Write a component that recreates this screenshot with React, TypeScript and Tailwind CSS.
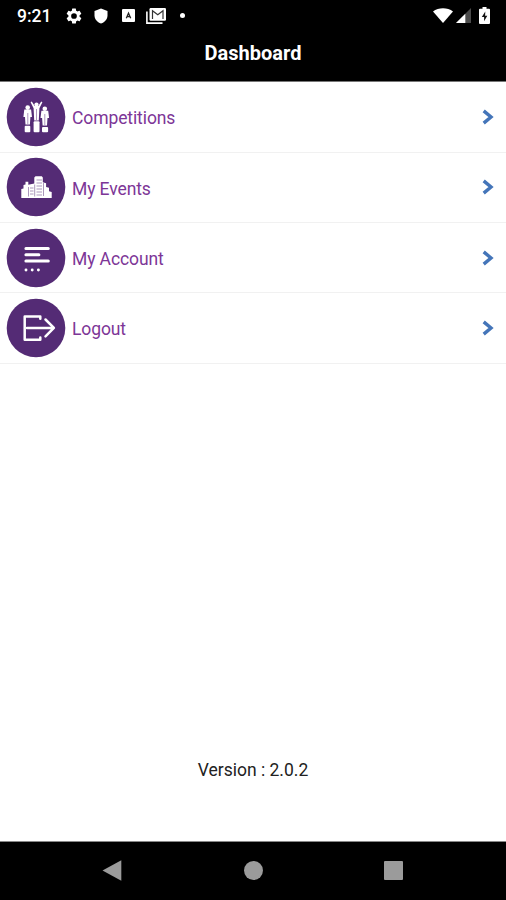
import type { ReactNode } from "react";

function StatusBar() {
  return (
    <div className="flex h-8 items-center bg-black pb-px text-white">
      <span className="ml-[17px] w-12 text-[17.500px] leading-8 font-medium">9:21</span>

      {/* Notifications */}
      <svg className="size-[18px]" viewBox="0 0 24 24" fill="currentColor">
        <path d="M19.4 13a7.500 7.500 0 0 0 0-2l2.100-1.650a.5.5 0 0 0 .12-.64l-2-3.460a.5.5 0 0 0-.61-.22l-2.490 1a7.300 7.300 0 0 0-1.690-.98l-.38-2.650A.49.49 0 0 0 14 2h-4a.49.49 0 0 0-.49.42l-.38 2.650a7.700 7.700 0 0 0-1.690.98l-2.490-1a.49.49 0 0 0-.61.22l-2 3.460a.49.49 0 0 0 .12.64L4.570 11a7.900 7.900 0 0 0 0 2l-2.110 1.650a.5.5 0 0 0-.12.64l2 3.460c.12.22.39.3.61.22l2.490-1c.52.4 1.080.73 1.690.98l.38 2.650c.03.24.24.42.49.42h4c.25 0 .46-.18.49-.42l.38-2.650a7.700 7.700 0 0 0 1.690-.98l2.490 1c.23.09.49 0 .61-.22l2-3.460a.5.5 0 0 0-.12-.64zM12 15.800a3.800 3.800 0 1 1 0-7.600 3.800 3.800 0 0 1 0 7.600z" />
      </svg>
      <svg className="ml-[11px] h-4 w-[14px]" viewBox="0 0 14 16" fill="currentColor">
        <path d="M7 .5 13.500 3v4.500c0 3.700-2.500 6.600-6.500 8-4-1.400-6.500-4.300-6.500-8V3z" />
      </svg>
      <svg className="ml-[14px] size-[13px]" viewBox="0 0 13 13">
        <rect width="13" height="13" rx="1" fill="currentColor" />
        <path d="m4.300 9.200 2.200-5 2.200 5M5 7.600h3" fill="none" stroke="#222" strokeWidth="1.300" />
      </svg>
      <svg className="ml-[11px] h-4 w-5" viewBox="0 0 20 16">
        <path d="M.9 3.500v11.600h15.600" fill="none" stroke="currentColor" strokeWidth="1.600" />
        <rect x="3.500" y="0" width="16.500" height="12.800" rx="1.200" fill="currentColor" />
        <path d="M6.500 11V2.800l5.250 4 5.250-4V11" fill="none" stroke="#333" strokeWidth="1.200" />
      </svg>
      <span className="ml-[14px] size-[5px] rounded-full bg-white" />

      {/* Signal and battery */}
      <svg className="ml-auto h-[15px] w-5" viewBox="0 0 20 15" fill="currentColor">
        <path d="M0 3.500C5.500-.9 14.500-.9 20 3.500L10 15z" />
      </svg>
      <svg className="ml-[3px] size-[15px]" viewBox="0 0 15 15">
        <path d="M15 0v15H0z" fill="#4b4b4b" />
        <path d="M9.300 5.700V15H0z" fill="currentColor" />
      </svg>
      <svg className="mr-4 ml-2 h-[17px] w-[11px]" viewBox="0 0 11 17">
        <path d="M3.500 0h4v1.800H10q1 0 1 1V16q0 1-1 1H1q-1 0-1-1V2.800q0-1 1-1h2.500z" fill="currentColor" />
        <path d="M6.300 4.500 2.800 10h2.300v4.300L8.300 8.700H6.100z" fill="#111" />
      </svg>
    </div>
  );
}

function PodiumIcon() {
  return (
    <g fill="#fff">
      <circle cx="21.700" cy="20.600" r="2.300" />
      <circle cx="30.500" cy="17.500" r="2.100" />
      <circle cx="38.800" cy="21.700" r="2.300" />
      <path d="M18.300 22.600h6.800l.9 7.400h-1.600l-.5 7.500h-4.400L19 30h-1.600z" />
      <path d="M35.400 23.700h6.800l.9 7.300h-1.600l-.5 7.500h-4.400L36.100 31h-1.600z" />
      <path d="m24.600 15.300 1.200-.7 2.900 4.300h3.600l2.900-4.300 1.200.7-3 6-.6 12.200h-4.600l-.6-12.200z" />
      <rect x="18.700" y="38.800" width="5.600" height="6.500" rx="1" />
      <rect x="27.600" y="34.300" width="5.900" height="11" rx="1" />
      <rect x="36" y="40" width="6.100" height="5.300" rx="1" />
      <path d="M21.800 26v11M30.500 22v11M38.800 27v11" stroke="#a58bb7" strokeWidth=".9" />
    </g>
  );
}

function BuildingsIcon() {
  return (
    <g>
      <path
        d="M15.300 40.700v-9l2.200-.5v-3.500l2-.5v-2.700h2.800v3l6-1.200v-6.200l1.200-1.200h6.300l1 1.200v4.800l3.300 1v3.700l2.900.8v3.600l2.700.6v6.100z"
        transform="translate(0 .3)"
        fill="#fff"
      />
      <path
        d="M28.700 27.500v12M22.500 30v9.500M30.500 23h5.500M30.500 26h5.500M30.500 29h5.500M30.500 32h5.500M30.500 35h5.500M30.500 38h5.500M24 31h3.500M24 34h3.500M24 37h3.500M37.500 26v13"
        fill="none"
        stroke="#a18bb3"
        strokeWidth=".9"
      />
    </g>
  );
}

function AccountIcon() {
  return (
    <g fill="none" stroke="#fff" strokeWidth="3" strokeLinecap="round">
      <path d="M19.900 20.500h22.400M19.900 26.700h13M19.900 33h22.400" />
      <path d="M20 42h.01M26.200 42h.01M32.400 42h.01" strokeWidth="2.900" />
    </g>
  );
}

function LogoutIcon() {
  return (
    <g fill="none" stroke="#fff" strokeWidth="2.500" strokeLinecap="round" strokeLinejoin="round">
      <path d="M34.300 18.500H18.700v23.200h15.600M34.300 18.500v2.300M34.300 41.700v-2.300" />
      <path d="M21 29.900h26.500M39.500 21.500l8.400 8.400-8.400 8.400" />
    </g>
  );
}

const menu: { label: string; icon: ReactNode }[] = [
  { label: "Competitions", icon: <PodiumIcon /> },
  { label: "My Events", icon: <BuildingsIcon /> },
  { label: "My Account", icon: <AccountIcon /> },
  { label: "Logout", icon: <LogoutIcon /> },
];

export default function App() {
  return (
    <div className="flex h-[900px] w-[506px] flex-col bg-white font-['Roboto',sans-serif]">
      <StatusBar />

      <header className="flex h-[50px] justify-center border-b border-[#777] bg-black pt-[7px]">
        <h1 className="text-[20px] leading-7 font-bold text-white">Dashboard</h1>
      </header>

      <nav className="pt-[0.400px]">
        {menu.map((item) => (
          <button
            key={item.label}
            className="flex h-[70.3px] w-full items-center border-b border-[#f1f1f1] pr-[12px] pl-[6px] text-left"
          >
            <svg className="size-[60px] shrink-0" viewBox="0 0 60 60">
              <circle cx="30" cy="30" r="29.300" fill="#542b75" />
              {item.icon}
            </svg>
            <span className="ml-[6px] flex-1 pt-[3px] text-[17.500px] tracking-[-0.1px] text-[#7d3697]">
              {item.label}
            </span>
            <svg className="h-4 w-3" viewBox="0 0 12 16" fill="none" stroke="#4475b9" strokeWidth="3.400">
              <path d="m1.700 1.900 7.300 6.100-7.300 6.100" />
            </svg>
          </button>
        ))}
      </nav>

      <p className="mt-auto mb-[59px] text-center text-[17.500px] leading-6 text-[#222]">Version : 2.0.2</p>

      {/* System navigation */}
      <footer className="flex h-[59px] items-center border-t border-[#888] bg-black pb-px text-[#9b9b9b]">
        <svg className="ml-[102px] h-[21px] w-5" viewBox="0 0 20 21" fill="currentColor">
          <path d="M.5 10.500 19.300.3v20.400z" />
        </svg>
        <span className="ml-[122px] size-[19px] rounded-full bg-[#9b9b9b]" />
        <span className="ml-[121px] size-[19px] rounded-[1px] bg-[#9b9b9b]" />
      </footer>
    </div>
  );
}
